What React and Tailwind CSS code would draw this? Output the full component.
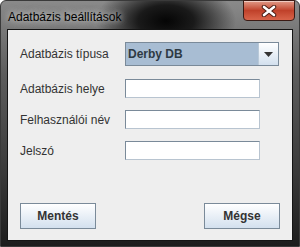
import React from "react";

const fields = [
  { label: "Adatbázis helye", mt: "mt-[13px]" },
  { label: "Felhasználói név", mt: "mt-[12px]" },
  { label: "Jelszó", mt: "mt-[12px]" },
];

const JButton = ({ children }) => (
  <button className="w-[76px] h-[26px] border border-[#7a8a99] bg-gradient-to-b from-[#ffffff] to-[#d3e0ee] text-[12px] font-bold text-[#333333]">
    {children}
  </button>
);

const App = () => {
  return (
    <div className="w-[300px] h-[247px] overflow-hidden bg-[#ffffff] font-['Liberation_Sans',Arial,sans-serif]">
      <div className="relative w-[300px] h-[247px] rounded-t-[6px] border border-[#3a3a3a] bg-[radial-gradient(ellipse_70px_40px_at_165px_20px,#050505,#1a1a1a_40%,transparent_100%),linear-gradient(to_bottom,#8a8a8a,#5c5c5c_30%,#3a3a3a_70%,#1c1c1c)] flex flex-col">
        {/* title bar */}
        <div className="h-[28px] flex items-start justify-between pl-[7px]">
          <span className="mt-[7px] text-[12px] text-black [text-shadow:0_0_6px_rgba(230,230,230,0.9),0_0_10px_rgba(200,200,200,0.7)]">
            Adatbázis beállítások
          </span>
          <div className="mr-[4px] -mt-[1px] w-[52px] h-[21px] rounded-b-[4px] border border-[#3b1a14] bg-gradient-to-b from-[#e09a88] via-[#c0412a] to-[#d8644a] flex items-center justify-center shadow-[inset_0_1px_0_rgba(255,255,255,0.5)]">
            <svg width="16" height="12" viewBox="0 0 16 12">
              <path d="M3 2L13 10M13 2L3 10" stroke="#4a1e16" strokeWidth="4.5" strokeLinecap="round" />
              <path d="M3 2L13 10M13 2L3 10" stroke="#ffffff" strokeWidth="2.6" strokeLinecap="round" />
            </svg>
          </div>
        </div>

        {/* content */}
        <div className="mx-[6px] h-[212px] border border-[#141414] bg-[#eeeeee] pl-[12px] pr-[12px] pt-[12px] pb-[11px] flex flex-col text-[12px] text-[#333333]">
          <div className="flex items-center h-[24px]">
            <span className="w-[105px]">Adatbázis típusa</span>
            <div className="flex w-[154px] h-[24px] border border-[#7a8a99] bg-[#a8bdd3]">
              <span className="flex-1 pl-[2px] leading-[22px] font-bold text-[#2e3a44]">
                Derby DB
              </span>
              <div className="w-[20px] h-[22px] border-l border-[#b9c9d8] bg-gradient-to-b from-[#ffffff] to-[#d3e0ee] flex items-center justify-center">
                <svg width="9" height="5" viewBox="0 0 9 5">
                  <path d="M0 0H9L4.5 5Z" fill="#333333" />
                </svg>
              </div>
            </div>
          </div>

          {fields.map((f) => (
            <div key={f.label} className={`flex items-center h-[19px] ${f.mt}`}>
              <span className="w-[105px]">{f.label}</span>
              <div className="w-[135px] h-[19px] border border-[#7a8a99] border-r-[#b8c4d0] border-b-[#b8c4d0] bg-white" />
            </div>
          ))}

          <div className="mt-auto flex justify-between">
            <JButton>Mentés</JButton>
            <JButton>Mégse</JButton>
          </div>
        </div>
      </div>
    </div>
  );
};

export default App;
